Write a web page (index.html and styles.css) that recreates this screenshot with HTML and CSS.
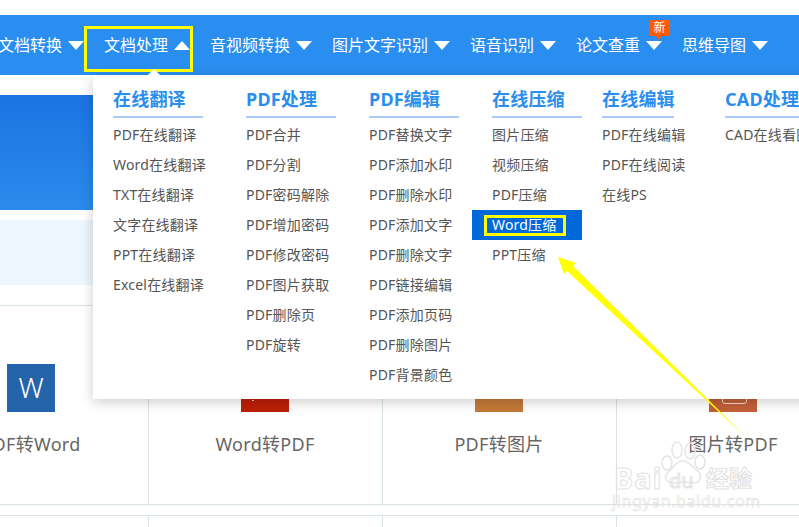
FILE: index.html
```html
<!DOCTYPE html>
<html lang="zh">
<head>
<meta charset="utf-8">
<title>文档处理</title>
<link rel="stylesheet" href="styles.css">
</head>
<body>
<div class="page">
  <nav class="nav">
    <a class="nav-item">文档转换<i class="caret"></i></a>
    <a class="nav-item">文档处理<i class="caret up"></i></a>
    <a class="nav-item">音视频转换<i class="caret"></i></a>
    <a class="nav-item">图片文字识别<i class="caret"></i></a>
    <a class="nav-item">语音识别<i class="caret"></i></a>
    <a class="nav-item has-badge">论文查重<i class="caret"></i><span class="badge">新</span></a>
    <a class="nav-item">思维导图<i class="caret"></i></a>
    <a class="nav-item nav-last">PDF</a>
  </nav>

  <main class="content">
    <div class="banner"></div>
    <div class="strip"></div>
    <section class="tools">
      <div class="tool"><div class="tool-icon word">W</div><p>PDF转Word</p></div>
      <div class="tool"><div class="tool-icon red"></div><p>Word转PDF</p></div>
      <div class="tool"><div class="tool-icon orange"></div><p>PDF转图片</p></div>
      <div class="tool"><div class="tool-icon brown"></div><p>图片转PDF</p></div>
    </section>
    <section class="tools-next">
      <div></div><div></div><div></div><div></div>
    </section>
  </main>

  <div class="menu-notch"></div>
  <div class="menu">
    <div class="menu-col">
      <h3>在线翻译</h3>
      <a>PDF在线翻译</a><a>Word在线翻译</a><a>TXT在线翻译</a><a>文字在线翻译</a><a>PPT在线翻译</a><a>Excel在线翻译</a>
    </div>
    <div class="menu-col">
      <h3>PDF处理</h3>
      <a>PDF合并</a><a>PDF分割</a><a>PDF密码解除</a><a>PDF增加密码</a><a>PDF修改密码</a><a>PDF图片获取</a><a>PDF删除页</a><a>PDF旋转</a>
    </div>
    <div class="menu-col">
      <h3>PDF编辑</h3>
      <a>PDF替换文字</a><a>PDF添加水印</a><a>PDF删除水印</a><a>PDF添加文字</a><a>PDF删除文字</a><a>PDF链接编辑</a><a>PDF添加页码</a><a>PDF删除图片</a><a>PDF背景颜色</a>
    </div>
    <div class="menu-col">
      <h3>在线压缩</h3>
      <a>图片压缩</a><a>视频压缩</a><a>PDF压缩</a><a class="active">Word压缩</a><a>PPT压缩</a>
    </div>
    <div class="menu-col narrow-title">
      <h3>在线编辑</h3>
      <a>PDF在线编辑</a><a>PDF在线阅读</a><a>在线PS</a>
    </div>
    <div class="menu-col">
      <h3>CAD处理</h3>
      <a>CAD在线看图</a>
    </div>
  </div>

  <div class="mark mark-nav"></div>
  <div class="mark mark-item"></div>
  <svg class="arrow" width="799" height="527" viewBox="0 0 799 527" aria-hidden="true">
    <polygon points="558,257 576,263 573,266 747,438 567,271 564,274" fill="#ffff00"/>
  </svg>

  <div class="watermark">
    <svg class="paw" width="60" height="46" viewBox="0 0 60 46" aria-hidden="true">
      <g fill="none" stroke="#e4e4e4" stroke-width="1.5">
        <ellipse cx="11" cy="22" rx="5" ry="7"/>
        <ellipse cx="21" cy="9" rx="5" ry="8"/>
        <ellipse cx="34" cy="10" rx="5" ry="8"/>
        <ellipse cx="44" cy="21" rx="5" ry="7"/>
        <path d="M27 20c-7 0-10 7-15 11-5 5-1 12 6 11 5-1 13-1 18 0 8 1 11-7 6-12-6-3-8-10-15-10z"/>
      </g>
    </svg>
    <div class="wm-brand"><span class="wm-bai">Bai</span><span class="wm-du">du</span><span class="wm-jy">经验</span></div>
    <div class="wm-url">jingyan.baidu.com</div>
  </div>
</div>
</body>
</html>
```
FILE: styles.css
```css
* { box-sizing: border-box; }
html, body { margin: 0; padding: 0; background: #fff; }
body { font-family: "Noto Sans", "Noto Sans CJK SC", sans-serif; }
.page { position: relative; width: 799px; height: 527px; overflow: hidden; background: #fff; }

.nav {
  display: flex; align-items: center; gap: 20px;
  height: 60px; margin: 15px 0 0 -2px; padding-bottom: 1px;
  background: #2a8ef0; color: #fff; font-size: 16px; white-space: nowrap;
  width: 900px;
}
.nav-item { position: relative; display: flex; align-items: center; gap: 6px; line-height: 24px; }
.nav-last { margin-left: 10px; }
.caret { width: 0; height: 0; border-left: 8px solid transparent; border-right: 8px solid transparent; border-top: 9px solid #fff; margin-top: 1px; }
.caret.up { border-top: 0; border-bottom: 9px solid #fff; }
.badge {
  position: absolute; left: 73px; top: -13px; width: 21px; height: 16px;
  background: #ff5a00; border-radius: 2px; color: #fff;
  font-size: 12px; line-height: 16px; text-align: center;
}
.badge::after {
  content: ""; position: absolute; left: 7px; top: 16px;
  border-left: 3px solid transparent; border-right: 3px solid transparent; border-top: 4px solid #ff5a00;
}

.content { display: flex; flex-direction: column; padding-top: 20px; }
.banner { height: 115px; background: linear-gradient(180deg, #1c73e2, #2a8bec); }
.strip { height: 65px; margin-top: 10px; background: #eef6ff; }
.tools {
  display: grid; grid-template-columns: repeat(4, 234px);
  height: 200px; margin-top: 20px; margin-left: -86px; width: 1100px;
  border-top: 1px solid #d8e3e8; border-bottom: 1px solid #d8e3e8;
}
.tool { display: flex; flex-direction: column; align-items: center; padding-top: 58px; box-shadow: 1px 0 0 #d8e3e8; }
.tool p { margin: 19px 0 0; font-size: 18px; line-height: 26px; color: #666; letter-spacing: 0.3px; white-space: nowrap; }
.tool-icon {
  position: relative; width: 48px; height: 48px; color: #fff;
  font-size: 28px; font-weight: 300; line-height: 47px; text-align: center;
}
.word { background: #2564a8; }
.red { background: #bd1f08; }
.red::before { content: ""; position: absolute; left: 11px; top: 36px; width: 2px; height: 1px; background: #f0c8c0; }
.orange { background: #c47a38; }
.brown { background: #c36038; }
.brown::before {
  content: ""; position: absolute; left: 13px; top: 30px; width: 23px; height: 8px;
  border: 1px solid #f3d8c8; border-radius: 0 0 3px 3px;
}
.tools-next {
  display: grid; grid-template-columns: repeat(4, 234px);
  height: 30px; margin-top: 10px; margin-left: -86px; width: 1100px;
  border-top: 1px solid #d8e3e8;
}
.tools-next div { box-shadow: 1px 0 0 #d8e3e8; }

.menu {
  position: absolute; left: 93px; top: 75px; width: 720px; height: 324px;
  display: grid; grid-template-columns: 133px 123px 123px 110px 123px 108px;
  padding-top: 10px; background: #fff;
  box-shadow: 0 3px 12px rgba(0, 0, 0, 0.2);
}
.menu-notch {
  position: absolute; left: 147px; top: 69px; z-index: 2;
  border-left: 7px solid transparent; border-right: 7px solid transparent; border-bottom: 7px solid #fff;
}
.menu-col { display: flex; flex-direction: column; align-items: flex-start; white-space: nowrap; }
.menu-col h3 {
  width: 90px; height: 33px; margin: 0 0 2px 20px;
  border-bottom: 2px solid #a8cbf8;
  color: #2a8ef0; font-size: 18px; line-height: 29px; font-weight: 700; letter-spacing: 0.2px; white-space: nowrap;
}
.narrow-title h3 { width: 72px; }
.menu-col a {
  display: block; width: 110px; height: 30px; padding-left: 20px;
  color: #555; font-size: 14px; line-height: 30px; letter-spacing: 0.2px;
}
.menu-col a.active { background: #0068d8; color: #fff; }

.mark { position: absolute; box-sizing: border-box; }
.mark-nav { left: 84px; top: 26px; width: 109px; height: 46px; border: 3px solid #ffff00; }
.mark-item { left: 484px; top: 215px; width: 82px; height: 21px; border: 3px solid #ffff00; }
.arrow { position: absolute; left: 0; top: 0; }

.watermark { position: absolute; left: 612px; top: 440px; width: 145px; height: 80px; color: transparent; }
.paw { position: absolute; left: 44px; top: 1px; }
.wm-brand { position: absolute; left: 2px; top: 17px; display: flex; align-items: center; font-weight: 700; -webkit-text-stroke: 1px #e2e2e2; }
.wm-bai { font-size: 29px; line-height: 36px; width: 55px; letter-spacing: 1px; }
.wm-du { font-size: 20px; line-height: 36px; width: 37px; font-weight: 400; margin-top: 6px; }
.wm-jy { font-size: 23px; line-height: 36px; }
.wm-url { position: absolute; left: 0; top: 51px; font-size: 16px; line-height: 20px; letter-spacing: 0.6px; -webkit-text-stroke: 0.6px #e2e2e2; white-space: nowrap; }
```
